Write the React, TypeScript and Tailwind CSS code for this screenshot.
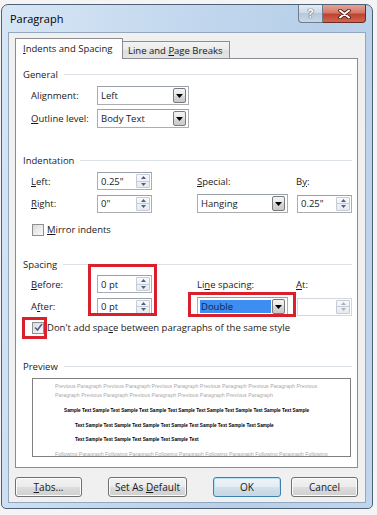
import React from "react";

const sans = "font-['Open_Sans',sans-serif]";

function U({ children }: { children: React.ReactNode }) {
  return <span className="underline underline-offset-[1px] decoration-[0.5px]">{children}</span>;
}

function DownTri({ color = "#000" }: { color?: string }) {
  return (
    <svg width="7" height="4" viewBox="0 0 7 4">
      <path d="M0 0h7L3.5 4z" fill={color} />
    </svg>
  );
}

function SpinArrow({ up, color }: { up?: boolean; color: string }) {
  return (
    <svg width="5" height="3" viewBox="0 0 5 3">
      <path d={up ? "M0 3h5L2.5 0z" : "M0 0h5L2.5 3z"} fill={color} />
    </svg>
  );
}

function Spin({ value, disabled }: { value: string; disabled?: boolean }) {
  const arrow = disabled ? "#a9b3c0" : "#4d6185";
  return (
    <div
      className={`flex h-[18px] w-[55px] items-stretch border bg-white ${
        disabled ? "border-[#d3d8de]" : "border-[#abadb3] border-t-[#9aa0a8]"
      }`}
    >
      <span className="flex flex-1 items-center pl-[3px]">{value}</span>
      <div className="my-px mr-px flex w-[14px] flex-col rounded-[1px] border border-[#c5ccd5] bg-[linear-gradient(#f7f9fb,#e6ebf0)]">
        <div className="flex flex-1 items-center justify-center border-b border-[#c5ccd5]">
          <SpinArrow up color={arrow} />
        </div>
        <div className="flex flex-1 items-center justify-center">
          <SpinArrow color={arrow} />
        </div>
      </div>
    </div>
  );
}

function Combo({ value, className, highlight }: { value: string; className: string; highlight?: boolean }) {
  return (
    <div className={`flex h-[19px] items-center border border-[#abadb3] border-t-[#9aa0a8] bg-white ${className}`}>
      <div className="flex flex-1 items-center self-stretch py-[2px] pl-[2px] pr-[1px]">
        <span
          className={`flex h-full flex-1 items-center pl-px ${
            highlight ? "bg-[#3d8ef0] text-[#0c1f4a]" : ""
          }`}
        >
          {value}
        </span>
      </div>
      <div className="mr-[2px] flex h-[15px] w-[13px] items-center justify-center rounded-[2px] border border-[#7a7a7a] bg-[linear-gradient(#f4f4f4,#e6e6e6_50%,#d8d8d8_50%,#c9c9c9)]">
        <DownTri />
      </div>
    </div>
  );
}

function Check({ checked }: { checked?: boolean }) {
  return (
    <div className="flex h-[12px] w-[12px] items-center justify-center border border-[#8e8f8f] bg-[linear-gradient(135deg,#dcdcdc,#fafafa)]">
      {checked && (
        <svg width="9" height="9" viewBox="0 0 9 9">
          <path d="M1 4.5L3.5 7L8 1" fill="none" stroke="#4a5f97" strokeWidth="1.6" />
        </svg>
      )}
    </div>
  );
}

function Section({ title, className = "" }: { title: string; className?: string }) {
  return (
    <div className={`flex h-[14px] items-center pl-[7px] pr-[5px] ${className}`}>
      <span className="text-[#222]">{title}</span>
      <div className="ml-[6px] h-px flex-1 bg-[#dbe0e6]" />
    </div>
  );
}

function Btn({ children, className, def }: { children: React.ReactNode; className: string; def?: boolean }) {
  return (
    <div
      className={`flex h-[20px] items-center justify-center rounded-[3px] border ${
        def
          ? "border-[#3c7fb1] bg-[linear-gradient(#eef5f9,#e3ecf2_50%,#d3e1ea_50%,#c5d6e2)] shadow-[inset_0_0_0_1px_#b6e0f5]"
          : "border-[#707070] bg-[linear-gradient(#f2f2f2,#ebebeb_50%,#dddddd_50%,#cfcfcf)] shadow-[inset_0_0_0_1px_#fcfcfc]"
      } ${className}`}
    >
      {children}
    </div>
  );
}

const prev =
  "Previous Paragraph Previous Paragraph Previous Paragraph Previous Paragraph Previous Paragraph Previous";
const prev2 = "Paragraph Previous Paragraph Previous Paragraph Previous Paragraph Previous Paragraph";
const s1 =
  "Sample Text Sample Text Sample Text Sample Text Sample Text Sample Text Sample Text Sample Text Sample";
const s2 = "Text Sample Text Sample Text Sample Text Sample Text Sample Text Sample Text Sample";
const s3 = "Text Sample Text Sample Text Sample Text Sample Text";
const foll =
  "Following Paragraph Following Paragraph Following Paragraph Following Paragraph Following Paragraph Following";

export default function App() {
  return (
    <div className={`h-[515px] w-[377px] overflow-hidden bg-[#f4f4f4] pt-[4px] text-[9.5px] leading-[13px] text-[#1a1a1a] ${sans}`}>
      {/* Window frame */}
      <div className="ml-px flex w-[372px] flex-col rounded-t-[7px] rounded-b-[5px] border border-[#4f6275] bg-[linear-gradient(100deg,#d7e6f5,#c3d8ee_40%,#b7cfe9_70%,#c1d6ed)] px-[6px] pb-[5px]">
        {/* Title bar */}
        <div className="flex h-[27px] items-start justify-between">
          <span className="pl-[2px] pt-[7px] text-[11px] text-black">Paragraph</span>
          <div className="flex">
            <div className="flex h-[18px] w-[25px] items-center justify-center rounded-bl-[4px] border border-t-0 border-[#6c7c90] bg-[linear-gradient(#e3ecf5,#cbd8e6_50%,#b6c8dc_50%,#c8d8ea)]">
              <span className="text-[12px] font-bold leading-none text-white [text-shadow:0_0_1px_#2e3b4c,0_0_1px_#2e3b4c]">
                ?
              </span>
            </div>
            <div className="flex h-[18px] w-[43px] items-center justify-center rounded-br-[4px] border border-l-0 border-t-0 border-[#6b2a24] bg-[linear-gradient(#e6a397,#d47868_45%,#c0432f_55%,#d2654f)]">
              <svg width="13" height="10" viewBox="0 0 13 10">
                <path d="M2 1.5L11 8.5M11 1.5L2 8.5" stroke="#4a1c17" strokeWidth="3.6" strokeLinecap="round" />
                <path d="M2 1.5L11 8.5M11 1.5L2 8.5" stroke="#fff" strokeWidth="2" strokeLinecap="round" />
              </svg>
            </div>
          </div>
        </div>

        {/* Client area */}
        <div className="flex flex-col border border-[#93a7bf] bg-[#f0f0f0] pb-[5px] pl-[6px] pr-[7px] pt-[5px]">
          {/* Tabs */}
          <div className="flex h-[21px] items-end">
            <div className="relative z-10 flex h-[21px] w-[108px] items-start border border-b-0 border-[#898c95] bg-white pl-[7px] pt-[3px]">
              <span>
                <U>I</U>ndents and Spacing
              </span>
            </div>
            <div className="mb-px flex h-[17px] w-[107px] items-center border border-l-0 border-b-0 border-[#898c95] bg-[linear-gradient(#f3f3f3,#ebebeb_50%,#dedede_50%,#e4e4e4)] pl-[5px]">
              <span>
                Line and <U>P</U>age Breaks
              </span>
            </div>
          </div>

          {/* Panel */}
          <div className="relative -mt-px flex h-[410px] flex-col border border-[#898c95] bg-white">
            <Section title="General" className="mt-[8px]" />
            <div className="mt-[5px] flex items-center pl-[15px]">
              <span className="w-[66px]">Alignment:</span>
              <Combo value="Left" className="w-[92px]" />
            </div>
            <div className="mt-[4px] flex items-center pl-[15px]">
              <span className="w-[66px]">
                <U>O</U>utline level:
              </span>
              <Combo value="Body Text" className="w-[92px]" />
            </div>

            <Section title="Indentation" className="mt-[25px]" />
            <div className="mt-[5px] flex items-center pl-[15px]">
              <span className="w-[66px]">
                <U>L</U>eft:
              </span>
              <Spin value='0.25"' />
              <span className="ml-[45px] w-[99px]">
                <U>S</U>pecial:
              </span>
              <span>
                B<U>y</U>:
              </span>
            </div>
            <div className="mt-[4px] flex items-center pl-[15px]">
              <span className="w-[66px]">
                <U>R</U>ight:
              </span>
              <Spin value='0"' />
              <Combo value="Hanging" className="ml-[45px] h-[18px] w-[91px]" />
              <div className="ml-[9px]">
                <Spin value='0.25"' />
              </div>
            </div>
            <div className="mt-[10px] flex h-[13px] items-center pl-[16px]">
              <Check />
              <span className="ml-[3px]">
                <U>M</U>irror indents
              </span>
            </div>

            <Section title="Spacing" className="mt-[21px]" />
            <div className="mt-[4px] flex items-center pl-[15px]">
              <span className="w-[66px]">
                <U>B</U>efore:
              </span>
              <Spin value="0 pt" />
              <span className="ml-[45px] w-[99px]">
                Li<U>n</U>e spacing:
              </span>
              <span>
                <U>A</U>t:
              </span>
            </div>
            <div className="mt-[4px] flex items-center pl-[15px]">
              <span className="w-[66px]">
                A<U>f</U>ter:
              </span>
              <Spin value="0 pt" />
              <Combo value="Double" highlight className="ml-[45px] h-[18px] w-[91px]" />
              <div className="ml-[9px]">
                <Spin value="" disabled />
              </div>
            </div>
            <div className="mt-[5px] flex h-[13px] items-center pl-[16px]">
              <Check checked />
              <span className="ml-[3px]">
                Don't add spa<U>c</U>e between paragraphs of the same style
              </span>
            </div>

            <Section title="Preview" className="mt-[25px]" />
            <div className="ml-[16px] mt-[5px] h-[79px] w-[319px] overflow-hidden border border-[#808080] bg-white font-['Liberation_Sans',sans-serif] text-[4.7px] leading-[9px] whitespace-nowrap">
              <div className="mt-[3px] pl-[22px] text-[5.3px] text-[#a8a8a8]">{prev}</div>
              <div className="pl-[22px] text-[5.3px] text-[#a8a8a8]">{prev2}</div>
              <div className="mt-[6px] pl-[31px] font-bold text-black">{s1}</div>
              <div className="mt-[6px] pl-[42px] font-bold text-black">{s2}</div>
              <div className="mt-[5px] pl-[42px] font-bold text-black">{s3}</div>
              <div className="mt-[6px] pl-[22px] text-[5.3px] text-[#a8a8a8]">{foll}</div>
            </div>

            {/* Annotation boxes */}
            <div className="absolute left-[72px] top-[205px] h-[52px] w-[69px] border-[3px] border-[#d9202b]" />
            <div className="absolute left-[172px] top-[233px] h-[25px] w-[108px] border-[3px] border-[#d9202b]" />
            <div className="absolute left-[6px] top-[258px] h-[22px] w-[25px] border-[3px] border-[#d9202b]" />
          </div>

          {/* Buttons */}
          <div className="mt-[9px] flex text-[10px]">
            <Btn className="w-[67px]">
              <span>
                <U>T</U>abs...
              </span>
            </Btn>
            <Btn className="ml-[26px] w-[79px]">
              <span>
                Set As <U>D</U>efault
              </span>
            </Btn>
            <Btn def className="ml-[26px] w-[68px]">
              OK
            </Btn>
            <Btn className="ml-[10px] w-[67px]">Cancel</Btn>
          </div>
        </div>
      </div>
    </div>
  );
}
